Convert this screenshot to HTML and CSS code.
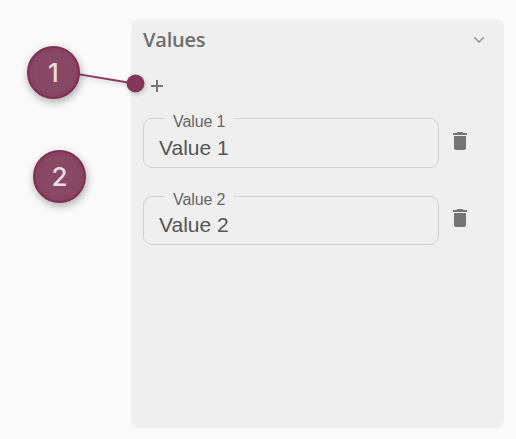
FILE: index.html
```
<!DOCTYPE html>
<html lang="en">
<head>
<meta charset="utf-8">
<title>Values</title>
<link rel="stylesheet" href="styles.css">
</head>
<body>
<main class="panel">
  <header class="panel-header">
    <h2 class="title">Values</h2>
    <svg class="chevron" width="12" height="8" viewBox="0 0 12 8"><path d="M1.200 1.200 6 6l4.800-4.800"/></svg>
  </header>
  <div class="toolbar">
    <svg class="plus" width="12" height="12" viewBox="0 0 12 12"><path d="M6 0v12M0 6h12"/></svg>
  </div>
  <div class="row">
    <fieldset class="field"><legend>Value 1</legend><span class="value">Value 1</span></fieldset>
    <svg class="trash" width="24" height="24" viewBox="0 0 24 24"><path d="M6 19c0 1.100.9 2 2 2h8c1.100 0 2-.9 2-2V7H6v12zM19 4h-3.500l-1-1h-5l-1 1H5v2h14V4z"/></svg>
  </div>
  <div class="row row-second">
    <fieldset class="field"><legend>Value 2</legend><span class="value">Value 2</span></fieldset>
    <svg class="trash" width="24" height="24" viewBox="0 0 24 24"><path d="M6 19c0 1.100.9 2 2 2h8c1.100 0 2-.9 2-2V7H6v12zM19 4h-3.500l-1-1h-5l-1 1H5v2h14V4z"/></svg>
  </div>
</main>
<svg class="connector" width="150" height="110" viewBox="0 0 150 110"><path d="M78 74.200 128 82.500"/><circle cx="135.500" cy="83.500" r="9"/></svg>
<div class="badge badge-one">1</div>
<div class="badge badge-two">2</div>
</body>
</html>
```
FILE: styles.css
```
* { box-sizing: border-box; }
body {
  margin: 0;
  padding: 19px 12px 11px 131px;
  height: 439px;
  overflow: hidden;
  background: #fafafa;
  font-family: "Liberation Sans", Arial, sans-serif;
}
.panel {
  height: 409px;
  padding: 0 12px;
  border-radius: 8px;
  background: #efefef;
}
.panel-header {
  display: flex;
  justify-content: space-between;
  align-items: center;
  height: 42px;
  padding-right: 7px;
}
.title {
  margin: 0;
  font: 600 20px/42px "Open Sans", "Noto Sans", sans-serif;
  letter-spacing: -0.2px;
  color: #6e6e6e;
}
.chevron { fill: none; stroke: #999; stroke-width: 1.6; }
.toolbar { display: flex; align-items: center; height: 46px; padding: 4px 0 0 8px; }
.plus { fill: none; stroke: #757575; stroke-width: 2; }
.row { display: flex; align-items: flex-start; height: 78px; }
.field {
  width: 296px;
  height: 61px;
  min-width: 0;
  margin: 0;
  padding: 0 15px;
  border: 1px solid #d0d0d0;
  border-radius: 9px;
}
.row-second .field { height: 60px; }
.field legend {
  margin-left: 5px;
  padding: 6px 9px 0;
  font-size: 16px;
  line-height: 17px;
  letter-spacing: -0.1px;
  color: #666;
}
.value { display: block; margin-top: 6px; font-size: 21px; line-height: 24px; color: #555; }
.row-second .value { margin-top: 5px; }
.trash { margin: 22px 0 0 9px; fill: #757575; }
.row-second .trash { margin-top: 21px; }
.connector {
  position: absolute;
  left: 0;
  top: 0;
  fill: #833657;
  stroke: none;
  filter: drop-shadow(1px 2px 2px rgba(0, 0, 0, .2));
}
.connector path { stroke: #883b5c; stroke-width: 1.8; }
.badge {
  position: absolute;
  width: 53px;
  height: 53px;
  border: 2px solid #812e53;
  border-radius: 50%;
  background: #894864;
  box-shadow: 1px 3px 8px rgba(0, 0, 0, .32), inset 0 0 4px rgba(124, 40, 80, .35);
  color: #eadde3;
  font: 500 26px/49px Inter, sans-serif;
  text-align: center;
}
.badge-one { left: 27px; top: 46px; }
.badge-two { left: 33px; top: 150px; }
```
